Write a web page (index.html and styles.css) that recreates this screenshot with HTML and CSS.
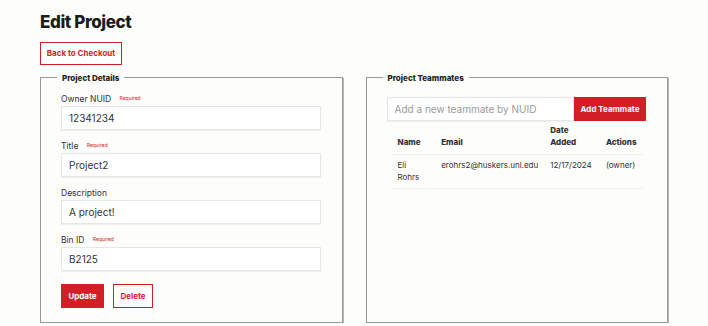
FILE: index.html
```html
<!DOCTYPE html>
<html lang="en">

<head>
  <meta charset="UTF-8">
  <meta name="viewport" content="width=device-width, initial-scale=1.0">
  <title>Edit Project</title>
  <link rel="stylesheet" href="styles.css">
</head>

<body>
  <main>
    <h1>Edit Project</h1>
    <button class="btn btn-outline back-btn">Back to Checkout</button>

    <div class="columns">
      <fieldset class="panel">
        <legend>Project Details</legend>

        <div class="field">
          <label>Owner NUID <span class="required">Required</span></label>
          <input type="text" value="12341234">
        </div>
        <div class="field">
          <label>Title <span class="required">Required</span></label>
          <input type="text" value="Project2">
        </div>
        <div class="field">
          <label>Description</label>
          <input type="text" value="A project!">
        </div>
        <div class="field">
          <label>Bin ID <span class="required">Required</span></label>
          <input type="text" value="B2125">
        </div>

        <div class="actions">
          <button class="btn btn-solid">Update</button>
          <button class="btn btn-outline">Delete</button>
        </div>
      </fieldset>

      <fieldset class="panel">
        <legend>Project Teammates</legend>

        <div class="add-row">
          <input type="text" placeholder="Add a new teammate by NUID">
          <button class="btn btn-solid">Add Teammate</button>
        </div>

        <table class="team-table">
          <thead>
            <tr>
              <th class="col-name">Name</th>
              <th class="col-email">Email</th>
              <th class="col-date">Date Added</th>
              <th>Actions</th>
            </tr>
          </thead>
          <tbody>
            <tr>
              <td>Eli Rohrs</td>
              <td>erohrs2@huskers.unl.edu</td>
              <td>12/17/2024</td>
              <td>(owner)</td>
            </tr>
          </tbody>
        </table>
      </fieldset>
    </div>
  </main>
</body>

</html>
```

FILE: styles.css
```css
* {
  box-sizing: border-box;
}

body {
  margin: 0;
  background: #fdfdfb;
  color: #2a2a2a;
  font-family: Inter, 'Noto Sans', Arial, sans-serif;
}

main {
  padding: 12px 40px 0;
}

h1 {
  margin: 0 0 7px;
  font-size: 17px;
  font-weight: 800;
  letter-spacing: -0.4px;
  line-height: 21px;
  color: #1c1c1c;
}

.btn {
  font-family: inherit;
  font-size: 8px;
  font-weight: 700;
  height: 24px;
  padding: 0 8px;
  border-radius: 0;
  cursor: pointer;
}

.btn-outline {
  background: #fff;
  color: #d21f26;
  border: 1px solid #d21f26;
}

.btn-solid {
  background: #d21f26;
  color: #fff;
  border: 1px solid #d21f26;
}

.back-btn {
  width: 82px;
  height: 23px;
  padding: 0;
}

.columns {
  display: flex;
  gap: 23px;
  margin-top: 8px;
}

.panel {
  flex: 1;
  margin: 0;
  min-width: 0;
  height: 250px;
  padding: 10px 21px 13px 20px;
  border: 1px solid #999;
  box-shadow: 1px 1px 0 #b5b5b5;
}

.panel legend {
  margin-left: -4px;
  padding: 0 5px;
  font-size: 8px;
  font-weight: 800;
  color: #222;
}

.field {
  margin-bottom: 10px;
}

.field label {
  display: block;
  font-size: 8.5px;
  line-height: 12px;
  height: 12px;
  margin-bottom: 1px;
  color: #333;
}

.required {
  margin-left: 6px;
  font-size: 5px;
  line-height: 0;
  vertical-align: 2px;
  color: #d21f26;
}

input {
  display: block;
  width: 100%;
  height: 24px;
  padding: 0 7px;
  font-family: inherit;
  font-size: 10px;
  color: #333;
  background: #fff;
  border: 1px solid #e6e6e4;
  border-radius: 0;
  box-shadow: 0 1px 1px rgba(0, 0, 0, 0.05);
}

input::placeholder {
  color: #9a9a9a;
}

.actions {
  display: flex;
  gap: 9px;
  margin-top: 13px;
}

.actions .btn-solid {
  width: 43px;
  padding: 0;
}

.actions .btn-outline {
  width: 40px;
  padding: 0;
}

.add-row {
  display: flex;
  margin-top: 4px;
}

.add-row input {
  flex: 1;
  width: auto;
}

.add-row .btn {
  width: 72px;
  padding: 0;
}

.team-table {
  width: 251px;
  margin: 0 0 0 5px;
  border-collapse: collapse;
  font-size: 8px;
  color: #333;
}

.team-table th,
.team-table td {
  text-align: left;
  padding: 3px 6px;
  line-height: 12px;
  border-bottom: 1px solid #eeeeec;
}

.team-table th {
  font-weight: 800;
  vertical-align: bottom;
  padding-bottom: 6px;
}

.team-table td {
  vertical-align: top;
  padding-top: 4px;
  padding-bottom: 5px;
}

.col-name {
  width: 45px;
}

.col-email {
  width: 108px;
}

.col-date {
  width: 56px;
}
```
